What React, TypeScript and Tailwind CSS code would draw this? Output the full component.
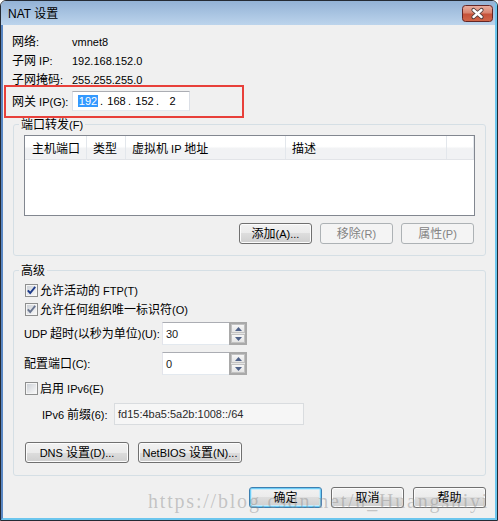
import React from "react";

// latin runs render at 11px (Tahoma 8pt look), CJK at 12px
function T({ s }: { s: string }) {
  return (
    <span className="whitespace-pre">
      {s.split(/([\u3000-\u9fff]+)/).map((p, i) =>
        !p ? null : /[\u3000-\u9fff]/.test(p) ? (
          <span key={i} className="text-[12px]">
            {p}
          </span>
        ) : (
          <span key={i} className="text-[11px]">
            {p}
          </span>
        )
      )}
    </span>
  );
}

const skins = {
  normal:
    "border-[#707070] bg-[linear-gradient(#f2f2f2_0%,#ebebeb_50%,#dddddd_50%,#cfcfcf_100%)] shadow-[inset_0_0_0_1px_#fcfcfc] text-black",
  primary:
    "border-[#3c7fb1] bg-[linear-gradient(#f2f2f2_0%,#ebebeb_50%,#dddddd_50%,#cfcfcf_100%)] shadow-[inset_0_0_0_1px_#6fcdf6,inset_0_0_0_2px_#c8ebfb] text-black",
  disabled: "border-[#adb2b5] bg-[#f4f4f4] text-[#838383]",
};

function Button({
  label,
  kind = "normal",
  className = "w-[73px]",
}: {
  label: string;
  kind?: keyof typeof skins;
  className?: string;
}) {
  return (
    <button
      type="button"
      className={`flex h-[21px] shrink-0 items-center justify-center rounded-[3px] border leading-[14px] ${skins[kind]} ${className}`}
    >
      <T s={label} />
    </button>
  );
}

function CheckBox({ checked, dim }: { checked?: boolean; dim?: boolean }) {
  return (
    <svg width="13" height="13" viewBox="0 0 13 13" className="shrink-0">
      <defs>
        <linearGradient id="cbfill" x1="0" y1="0" x2="1" y2="1">
          <stop offset="0" stopColor="#cdd1d7" />
          <stop offset="1" stopColor="#f8f8f8" />
        </linearGradient>
      </defs>
      <rect x="0.5" y="0.5" width="12" height="12" fill="#f5f5f5" stroke="#8e8f8f" />
      <rect x="2" y="2" width="9" height="9" fill="url(#cbfill)" />
      {checked && (
        <path
          d="M2.8 6.3 L5.2 9 L10.2 2.8"
          fill="none"
          stroke={dim ? "#6a7690" : "#1d3a8a"}
          strokeWidth="1.9"
        />
      )}
    </svg>
  );
}

function Arrow({ up }: { up?: boolean }) {
  return (
    <svg width="7" height="4" viewBox="0 0 7 4">
      <path d={up ? "M0 4 L3.5 0 L7 4 Z" : "M0 0 L7 0 L3.5 4 Z"} fill="#4f6289" />
    </svg>
  );
}

function Spin({ value }: { value: string }) {
  return (
    <div className="flex h-[23px] w-[85px]">
      <div className="flex-1 border border-t-[#abadb3] border-r-0 border-l-[#e2e3ea] border-b-[#e3e9ef] bg-white pl-[3px] pt-[3px] leading-[14px] text-[#1a1a1a]">
        <T s={value} />
      </div>
      <div className="flex w-[18px] flex-col gap-[1px] border-2 border-[#a9a9a9] bg-[#e6e6e6]">
        <div className="flex flex-1 items-center justify-center border border-[#c2c2c2] bg-[linear-gradient(#f7f7f7,#e4e4e4)]">
          <Arrow up />
        </div>
        <div className="flex flex-1 items-center justify-center border border-[#c2c2c2] bg-[linear-gradient(#f7f7f7,#e4e4e4)]">
          <Arrow />
        </div>
      </div>
    </div>
  );
}

function IpBox() {
  return (
    <div className="flex h-[20px] w-[118px] items-center border border-t-[#abadb3] border-x-[#dbdfe6] border-b-[#e3e9ef] bg-white pl-[3px] text-[11px] leading-[14px]">
      <span className="flex w-[24px] justify-center">
        <span className="bg-[#3399ff] px-[1px] leading-[12px] text-white">192</span>
      </span>
      {["168", "152", "2"].map((n) => (
        <span key={n} className="flex w-[28px]">
          <span className="w-[5px]">.</span>
          <span className="flex-1 text-center">{n}</span>
        </span>
      ))}
    </div>
  );
}

const info = [
  ["网络:", "vmnet8"],
  ["子网 IP:", "192.168.152.0"],
  ["子网掩码:", "255.255.255.0"],
];

const columns = [
  { label: "主机端口", w: "w-[62px] pl-[7px]" },
  { label: "类型", w: "w-[39px] pl-[6px]" },
  { label: "虚拟机 IP 地址", w: "w-[160px] pl-[6px]" },
  { label: "描述", w: "w-[161px] pl-[6px]" },
  { label: "", w: "flex-1" },
];

export default function App() {
  return (
    <div className="relative h-[521px] w-[498px] overflow-hidden rounded-t-[6px] border border-[#242a34] bg-[#f0f0f0] font-['Liberation_Sans','Noto_Sans_CJK_SC',sans-serif] leading-[14px] text-black">
      <div className="flex h-full flex-col border-r-2 border-[#6cc6ee]">
        {/* title bar */}
        <div className="flex h-[24px] shrink-0 items-center justify-between bg-[linear-gradient(#93b2d6,#bcd4ec)] pl-[7px] pr-[2px]">
          <span className="pt-[2px] text-[12px] leading-[14px]">NAT 设置</span>
          <svg width="31" height="17" viewBox="0 0 31 17">
            <defs>
              <linearGradient id="closebg" x1="0" y1="0" x2="0" y2="1">
                <stop offset="0" stopColor="#eab0a3" />
                <stop offset="0.45" stopColor="#d98570" />
                <stop offset="0.55" stopColor="#c5523a" />
                <stop offset="1" stopColor="#d2674a" />
              </linearGradient>
            </defs>
            <rect x="0.5" y="0.5" width="30" height="16" rx="3" fill="url(#closebg)" stroke="#632626" />
            <path d="M11.5 5 L19.5 12 M19.5 5 L11.5 12" stroke="#4a3a3a" strokeWidth="4.2" strokeLinecap="round" />
            <path d="M11.5 5 L19.5 12 M19.5 5 L11.5 12" stroke="#ffffff" strokeWidth="2.4" strokeLinecap="round" />
          </svg>
        </div>

        {/* client area */}
        <div className="relative flex flex-1 flex-col border-b-2 border-l-2 border-b-[#6cc6ee] border-l-[#5a87c3]">
          <div className="flex flex-col pl-[9px] pt-[7px]">
            {info.map(([k, v]) => (
              <div key={k} className="flex h-[19px] items-center">
                <span className="w-[60px]">
                  <T s={k} />
                </span>
                <T s={v} />
              </div>
            ))}
          </div>

          <div className="mt-[2px] flex h-[20px] items-center pl-[9px]">
            <span className="w-[60px]">
              <T s="网关 IP(G):" />
            </span>
            <IpBox />
          </div>

          {/* red annotation frame */}
          <div className="pointer-events-none absolute left-[1px] top-[60px] h-[33px] w-[240px] border-2 border-[#e8403a]" />

          {/* 端口转发 */}
          <fieldset className="ml-[10px] mt-[6px] w-[473px] rounded-[3px] border border-[#d5dfe5]">
            <legend className="ml-[5px] h-[14px] overflow-visible px-[2px] leading-[14px]">
              <T s="端口转发(F)" />
            </legend>
            <div className="flex flex-col px-[10px] pb-[11px] pt-[4px]">
              <div className="h-[81px] border border-[#828790] bg-white">
                <div className="flex h-[24px] border-b border-[#e2e4e8] bg-[linear-gradient(#ffffff_0%,#ffffff_45%,#f1f2f4_55%,#f1f2f4_100%)]">
                  {columns.map((c, i) => (
                    <div
                      key={i}
                      className={`flex items-center border-r border-[#e3e7ec] pt-[1px] ${c.w}`}
                    >
                      <T s={c.label} />
                    </div>
                  ))}
                </div>
              </div>
              <div className="mt-[7px] flex h-[21px] justify-end gap-[8px] pr-[1px]">
                <Button label="添加(A)..." />
                <Button label="移除(R)" kind="disabled" />
                <Button label="属性(P)" kind="disabled" />
              </div>
            </div>
          </fieldset>

          {/* 高级 */}
          <fieldset className="ml-[10px] mt-[7px] w-[473px] rounded-[3px] border border-[#d5dfe5]">
            <legend className="ml-[5px] h-[14px] overflow-visible px-[2px] leading-[14px]">
              <T s="高级" />
            </legend>
            <div className="flex flex-col pb-[12px] pt-[4px]">
              <div className="flex h-[19px] items-center gap-[2px] pl-[11px]">
                <CheckBox checked />
                <T s="允许活动的 FTP(T)" />
              </div>
              <div className="flex h-[19px] items-center gap-[2px] pl-[11px]">
                <CheckBox checked dim />
                <T s="允许任何组织唯一标识符(O)" />
              </div>
              <div className="mt-[3px] flex h-[23px] items-center pl-[10px]">
                <span className="w-[138px]">
                  <T s="UDP 超时(以秒为单位)(U):" />
                </span>
                <Spin value="30" />
              </div>
              <div className="mt-[7px] flex h-[23px] items-center pl-[10px]">
                <span className="w-[138px]">
                  <T s="配置端口(C):" />
                </span>
                <Spin value="0" />
              </div>
              <div className="mt-[4px] flex h-[19px] items-center gap-[2px] pl-[11px]">
                <CheckBox />
                <T s="启用 IPv6(E)" />
              </div>
              <div className="mt-[5px] flex h-[22px] items-center pl-[28px]">
                <span className="w-[72px]">
                  <T s="IPv6 前缀(6):" />
                </span>
                <div className="h-[22px] w-[190px] border border-[#d9dcdf] bg-[#f6f6f6] pl-[3px] pt-[2px] leading-[14px] text-[#2a2a2a]">
                  <T s="fd15:4ba5:5a2b:1008::/64" />
                </div>
              </div>
              <div className="mt-[17px] flex h-[21px] gap-[9px] pl-[11px]">
                <Button label="DNS 设置(D)..." className="w-[104px]" />
                <Button label="NetBIOS 设置(N)..." className="w-[104px]" />
              </div>
            </div>
          </fieldset>

          <div className="mt-[11px] flex h-[21px] justify-end gap-[9px] pr-[9px]">
            <Button label="确定" kind="primary" />
            <Button label="取消" />
            <Button label="帮助" />
          </div>
        </div>
      </div>

      {/* blog watermark */}
      <div className="pointer-events-none absolute left-[147px] top-[489px] whitespace-nowrap font-['Liberation_Serif',serif] text-[20px] leading-[22px] tracking-[1.8px] text-[rgba(140,140,140,0.45)]">
        https://blog.csdn.net/u_Huangshiyi
      </div>
    </div>
  );
}
